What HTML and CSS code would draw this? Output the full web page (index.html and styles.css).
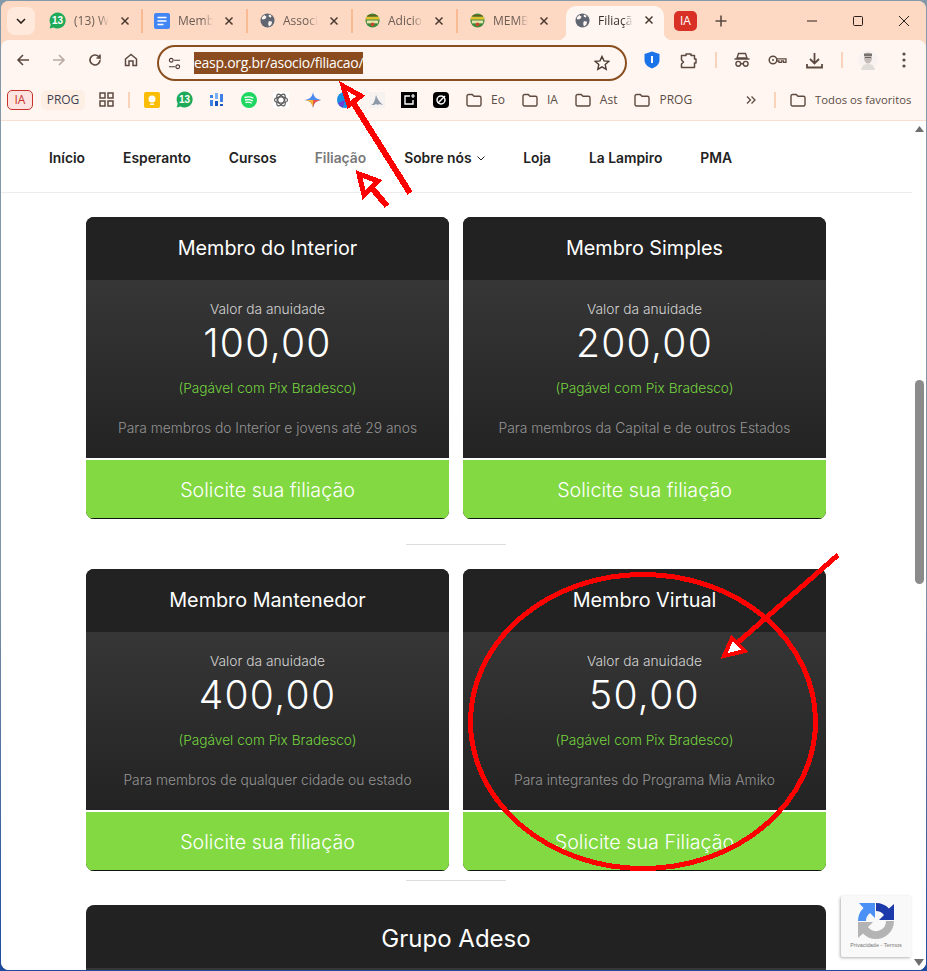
FILE: index.html
```html
<!DOCTYPE html>
<html lang="pt-BR">
<head>
<meta charset="utf-8">
<title>Filiação</title>
<link rel="stylesheet" href="styles.css">
</head>
<body>
<svg class="defs" width="0" height="0">
  <defs>
    <symbol id="globe" viewBox="0 0 16 16"><circle cx="8" cy="8" r="7.5" fill="#5f6672"/><path d="M4.500 2 7 4 5.500 6.500 2.500 7 1.800 5zM9.500 8.500l3.500.8-1 3.200-2.500 2-.8-3zM10 1.500l2.500 1.800-1.500 1.700-2-1.800z" fill="#fff6f2"/></symbol>
    <symbol id="wa" viewBox="0 0 16 16"><path d="M8 .5a7.5 7.5 0 1 1-3.600 14L.6 15.500l1-3.700A7.500 7.500 0 0 1 8 .5z" fill="#1faa59"/></symbol>
    <symbol id="coat" viewBox="0 0 16 16"><circle cx="8" cy="8" r="7.500" fill="#3d8a3a"/><rect x="1" y="4" width="14" height="3" fill="#e0c030"/><rect x="2" y="8" width="12" height="3" fill="#e8e4b0"/><circle cx="8" cy="12" r="2" fill="#c84a2a"/><path d="M3 2h10v1.500H3z" fill="#6b5a20"/></symbol>
    <symbol id="folder" viewBox="0 0 16 14"><path d="M1 3a1.500 1.500 0 0 1 1.500-1.500h3.700L8 3.300h5.500A1.500 1.500 0 0 1 15 4.800v6.700a1.500 1.500 0 0 1-1.500 1.500h-11A1.500 1.500 0 0 1 1 11.500z" fill="none" stroke="#5e4a3e" stroke-width="1.400"/></symbol>
    <symbol id="x" viewBox="0 0 10 10"><path d="M1.500 1.500l7 7M8.500 1.500l-7 7" stroke="#4a3a32" stroke-width="1.500" fill="none"/></symbol>
  </defs>
</svg>

<div class="browser">
  <header class="tabstrip">
    <div class="tabsearch"><svg width="10" height="6" viewBox="0 0 10 6"><path d="M1 1l4 4 4-4" fill="none" stroke="#2a201b" stroke-width="1.600"/></svg></div>
    <div class="tab tab-first"><span class="fav-wa"><svg width="17" height="17"><use href="#wa"/></svg><b>13</b></span><span class="tab-title">(13) W</span><svg class="tab-x" width="10" height="10"><use href="#x"/></svg></div>
    <div class="tab tab-doc"><svg width="16" height="16" viewBox="0 0 16 16"><rect width="16" height="16" rx="2" fill="#4285f4"/><path d="M3.500 4.500h9M3.500 8h9M3.500 11.500h6" stroke="#fff" stroke-width="1.500"/></svg><span class="tab-title">Memb</span><svg class="tab-x" width="10" height="10"><use href="#x"/></svg></div>
    <div class="tab"><svg width="15" height="15"><use href="#globe"/></svg><span class="tab-title">Associ</span><svg class="tab-x" width="10" height="10"><use href="#x"/></svg></div>
    <div class="tab"><svg width="15" height="15"><use href="#coat"/></svg><span class="tab-title">Adicio</span><svg class="tab-x" width="10" height="10"><use href="#x"/></svg></div>
    <div class="tab tab-last"><svg width="15" height="15"><use href="#coat"/></svg><span class="tab-title">MEMB</span><svg class="tab-x" width="10" height="10"><use href="#x"/></svg></div>
    <div class="tab-active"><svg width="15" height="15"><use href="#globe"/></svg><span class="tab-title active-title">Filiaçã</span><svg class="tab-x" width="10" height="10"><use href="#x"/></svg></div>
    <div class="ia-tab">IA</div>
    <svg class="newtab" width="12" height="12" viewBox="0 0 12 12"><path d="M6 .5v11M.5 6h11" stroke="#5a4a40" stroke-width="1.600"/></svg>
    <div class="winctl">
      <svg width="12" height="12" viewBox="0 0 12 12"><path d="M1 6h10" stroke="#2a201b" stroke-width="1"/></svg>
      <svg width="12" height="12" viewBox="0 0 12 12"><rect x="1.500" y="1.500" width="9" height="9" rx="1" fill="none" stroke="#2a201b" stroke-width="1"/></svg>
      <svg width="12" height="12" viewBox="0 0 12 12"><path d="M1 1l10 10M11 1L1 11" stroke="#2a201b" stroke-width="1"/></svg>
    </div>
  </header>

  <div class="toolbar">
    <div class="navbtns">
      <svg width="16" height="16" viewBox="0 0 16 16"><path d="M14 8H3M8 3 3 8l5 5" fill="none" stroke="#5c4a40" stroke-width="1.600"/></svg>
      <svg width="16" height="16" viewBox="0 0 16 16"><path d="M2 8h11M8 3l5 5-5 5" fill="none" stroke="#b8aaa2" stroke-width="1.600"/></svg>
      <svg width="16" height="16" viewBox="0 0 16 16"><path d="M13 8a5 5 0 1 1-1.500-3.600L13 6V2.500M13 6H9.500" fill="none" stroke="#5c4a40" stroke-width="1.600"/></svg>
      <svg width="16" height="16" viewBox="0 0 16 16"><path d="M2.500 7 8 2.500 13.500 7v6.500h-3.500V9H6v4.500H2.500z" fill="none" stroke="#5c4a40" stroke-width="1.500"/></svg>
    </div>
    <div class="omnibox">
      <svg class="tune" width="13" height="13" viewBox="0 0 14 14"><circle cx="3.500" cy="3.500" r="2" fill="none" stroke="#4a3a32" stroke-width="1.200"/><path d="M6.500 3.500H13M1 10.500h6.500" stroke="#4a3a32" stroke-width="1.200"/><circle cx="10.500" cy="10.500" r="2" fill="none" stroke="#4a3a32" stroke-width="1.200"/></svg>
      <span class="url">easp.org.br/asocio/filiacao/</span>
      <svg class="star" width="16" height="16" viewBox="0 0 16 16"><path d="M8 1.500l2 4.400 4.700.5-3.500 3.200 1 4.700L8 11.900l-4.200 2.400 1-4.700L1.300 6.400 6 5.900z" fill="none" stroke="#4a3a32" stroke-width="1.400"/></svg>
    </div>
    <div class="actions">
      <svg class="a-shield" width="16" height="18" viewBox="0 0 16 18"><path d="M8 .5l7.500 2.500v6c0 4-3.200 7-7.500 8.500C3.700 16 .5 13 .5 9V3z" fill="#1a73e8"/><rect x="7" y="5" width="2" height="7" fill="#fff"/></svg>
      <svg class="a-puzzle" width="17" height="17" viewBox="0 0 17 17"><path d="M1.500 3.500H6V2h5v1.500h3.500V7H16v4h-1.500v4.500h-13V12L3.500 10 1.500 8z" fill="none" stroke="#5c4a40" stroke-width="1.500" stroke-linejoin="round"/></svg>
      <i class="sep a-sep1"></i>
      <svg class="a-spy" width="16" height="16" viewBox="0 0 16 16"><path d="M4.500 1.500h7L13 6H3zM.5 7h15" fill="none" stroke="#5c4a40" stroke-width="1.400"/><circle cx="4.300" cy="11.800" r="2.400" fill="none" stroke="#5c4a40" stroke-width="1.400"/><circle cx="11.700" cy="11.800" r="2.400" fill="none" stroke="#5c4a40" stroke-width="1.400"/><path d="M6.700 11.800h2.600" stroke="#5c4a40" stroke-width="1.400"/></svg>
      <svg class="a-key" width="19" height="12" viewBox="0 0 19 12"><circle cx="5" cy="6" r="3.800" fill="none" stroke="#5c4a40" stroke-width="1.500"/><circle cx="5" cy="6" r="1" fill="#5c4a40"/><path d="M9 4.800h9v3.600h-2.500V6.800h-2v1.600H11V7H9" fill="none" stroke="#5c4a40" stroke-width="1.300"/></svg>
      <svg class="a-dl" width="17" height="17" viewBox="0 0 17 17"><path d="M8.500 1v10M4 7l4.500 4.500L13 7M1 12v3.500h15V12" fill="none" stroke="#5c4a40" stroke-width="1.800"/></svg>
      <i class="sep a-sep2"></i>
      <svg class="a-avatar" width="20" height="22" viewBox="0 0 20 22"><circle cx="10" cy="11" r="10" fill="#f8f3f0"/><ellipse cx="10" cy="9" rx="4" ry="5.500" fill="#c4bcb6"/><path d="M6 4.500h8v2.500H6z" fill="#77726e"/><path d="M7 8.500h6" stroke="#666" stroke-width="1"/><path d="M3 21c1-5 4-6 7-6s6 1 7 6z" fill="#e0dcd8"/></svg>
      <svg class="a-dots" width="4" height="16" viewBox="0 0 4 16"><circle cx="2" cy="2" r="1.600" fill="#5c4a40"/><circle cx="2" cy="8" r="1.600" fill="#5c4a40"/><circle cx="2" cy="14" r="1.600" fill="#5c4a40"/></svg>
    </div>
  </div>

  <div class="bookmarks">
    <span class="chip-ia">IA</span>
    <span class="chip-prog">PROG</span>
    <svg class="b-grid" width="15" height="15" viewBox="0 0 15 15"><path d="M1 1h5v5H1zM9 1h5v5H9zM1 9h5v5H1zM9 9h5v5H9z" fill="none" stroke="#5c4a40" stroke-width="1.500"/></svg>
    <i class="sep b-sep"></i>
    <div class="b-icons">
      <svg width="16" height="16" viewBox="0 0 16 16"><rect width="16" height="16" rx="2" fill="#fbbc04"/><circle cx="8" cy="7" r="3.500" fill="#fff"/><rect x="6" y="11.500" width="4" height="1.500" fill="#fff"/></svg>
      <span class="fav-wa"><svg width="17" height="17"><use href="#wa"/></svg><b>13</b></span>
      <svg width="16" height="16" viewBox="0 0 16 16"><g fill="#3f7fe8"><rect x="1" y="3" width="3" height="3"/><rect x="1" y="8" width="3" height="6"/><rect x="6" y="1" width="3" height="6" fill="#7ab0f5"/><rect x="6" y="9" width="3" height="5" fill="#1b55c0"/><rect x="11" y="2" width="3" height="8"/><rect x="11" y="12" width="3" height="2" fill="#1b55c0"/></g></svg>
      <svg width="16" height="16" viewBox="0 0 16 16"><circle cx="8" cy="8" r="8" fill="#1ed760"/><path d="M3.500 5.500c3-.8 6.500-.6 9 .8M4 8c2.500-.6 5.500-.4 7.800.8M4.500 10.500c2-.5 4.500-.3 6.300.7" fill="none" stroke="#fff" stroke-width="1.300"/></svg>
      <svg width="16" height="16" viewBox="0 0 16 16"><rect width="16" height="16" fill="#fff"/><g fill="none" stroke="#5a5a5a" stroke-width="1.200"><ellipse cx="8" cy="8" rx="6.500" ry="3.200"/><ellipse cx="8" cy="8" rx="6.500" ry="3.200" transform="rotate(60 8 8)"/><ellipse cx="8" cy="8" rx="6.500" ry="3.200" transform="rotate(120 8 8)"/></g></svg>
      <svg width="16" height="16" viewBox="0 0 16 16"><path d="M8 0c.6 4.500 3 7.200 8 8-5 .8-7.400 3.500-8 8-.6-4.500-3-7.200-8-8 5-.8 7.400-3.500 8-8z" fill="#4a8af0"/><path d="M8 8h8c-5 .8-7.400 3.500-8 8z" fill="#e8554a"/><path d="M8 8v8c-.6-4.500-3-7.200-8-8z" fill="#f5b82e"/></svg>
      <svg width="16" height="16" viewBox="0 0 16 16"><circle cx="8" cy="8" r="8" fill="#1a8fe0"/><path d="M1 11a8 8 0 0 0 5 4.800L8 8z" fill="#6b3fd6"/><path d="M8 3a5 5 0 0 1 5 5H8z" fill="#fff6f2"/></svg>
      <svg width="16" height="16" viewBox="0 0 16 16"><rect width="16" height="16" fill="#f6f2f0"/><path d="M2 13c3-1 4-5 5-10 1 3 3 7 7 10l-4-1-1 1-2-1-2 1z" fill="#8d99a8"/></svg>
      <svg width="16" height="16" viewBox="0 0 16 16"><rect width="16" height="16" fill="#000"/><path d="M9 4H4v8h8V8" fill="none" stroke="#fff" stroke-width="1.400"/><path d="M12 2v4M10 4h4" stroke="#fff" stroke-width="1.200"/></svg>
      <svg width="16" height="16" viewBox="0 0 16 16"><rect width="16" height="16" rx="4" fill="#000"/><circle cx="8" cy="8" r="4" fill="none" stroke="#fff" stroke-width="1.500"/><path d="M5 11 12 4" stroke="#fff" stroke-width="1.500"/></svg>
    </div>
    <div class="b-folders">
      <span class="folder"><svg width="16" height="14"><use href="#folder"/></svg>Eo</span>
      <span class="folder"><svg width="16" height="14"><use href="#folder"/></svg>IA</span>
      <span class="folder"><svg width="16" height="14"><use href="#folder"/></svg>Ast</span>
      <span class="folder"><svg width="16" height="14"><use href="#folder"/></svg>PROG</span>
    </div>
    <svg class="b-more" width="10" height="8" viewBox="0 0 10 8"><path d="M1 .5 4.500 4 1 7.500M5.500.5 9 4 5.500 7.500" fill="none" stroke="#5c4a40" stroke-width="1.300"/></svg>
    <i class="sep b-sep2"></i>
    <span class="folder folder-all"><svg width="16" height="14"><use href="#folder"/></svg>Todos os favoritos</span>
  </div>

  <div class="viewport">
    <main class="page">
      <nav class="sitenav">
        <a>Início</a><a>Esperanto</a><a>Cursos</a><a class="current">Filiação</a>
        <a class="has-sub">Sobre nós <svg width="8" height="5" viewBox="0 0 8 5"><path d="M.5.5 4 4 7.500.5" fill="none" stroke="#222" stroke-width="1"/></svg></a>
        <a>Loja</a><a>La Lampiro</a><a>PMA</a>
      </nav>

      <section class="cards first">
        <article class="card">
          <h2 class="card-head">Membro do Interior</h2>
          <div class="card-body"><p class="lbl">Valor da anuidade</p><p class="price">100,00</p><p class="pix">(Pagável com Pix Bradesco)</p><p class="desc">Para membros do Interior e jovens até 29 anos</p></div>
          <a class="card-btn">Solicite sua filiação</a>
        </article>
        <article class="card">
          <h2 class="card-head">Membro Simples</h2>
          <div class="card-body"><p class="lbl">Valor da anuidade</p><p class="price">200,00</p><p class="pix">(Pagável com Pix Bradesco)</p><p class="desc">Para membros da Capital e de outros Estados</p></div>
          <a class="card-btn">Solicite sua filiação</a>
        </article>
      </section>
      <hr class="rule rule-a">
      <section class="cards">
        <article class="card">
          <h2 class="card-head">Membro Mantenedor</h2>
          <div class="card-body"><p class="lbl">Valor da anuidade</p><p class="price">400,00</p><p class="pix">(Pagável com Pix Bradesco)</p><p class="desc">Para membros de qualquer cidade ou estado</p></div>
          <a class="card-btn">Solicite sua filiação</a>
        </article>
        <article class="card">
          <h2 class="card-head">Membro Virtual</h2>
          <div class="card-body"><p class="lbl">Valor da anuidade</p><p class="price">50,00</p><p class="pix">(Pagável com Pix Bradesco)</p><p class="desc">Para integrantes do Programa Mia Amiko</p></div>
          <a class="card-btn">Solicite sua Filiação</a>
        </article>
      </section>
      <hr class="rule rule-b">
      <section class="wide">
        <h2 class="wide-head">Grupo Adeso</h2>
        <div class="wide-body"></div>
      </section>
    </main>
    <aside class="scrollbar">
      <svg width="9" height="6" viewBox="0 0 9 6"><path d="M4.500 0 9 6H0z" fill="#6e6e6e"/></svg>
      <div class="thumb"></div>
      <svg width="10" height="7" viewBox="0 0 10 7"><path d="M5 7 0 0h10z" fill="#6e6e6e"/></svg>
    </aside>
  </div>
</div>

<div class="recaptcha">
  <svg width="38" height="38" viewBox="0 0 38 38">
    <path d="M37 19A18 18 0 0 1 19 37 18 18 0 0 1 6 31.500L1 36V20H16L11 25A10 10 0 0 0 29 19z" fill="#b4b4b4"/>
    <path d="M1 19A18 18 0 0 1 6.500 6L2 1H18V16L13 11A10 10 0 0 0 9 19z" fill="#4a90f5"/>
    <path d="M19 1A18 18 0 0 1 32 6.500L37 2V18H22L27 13A10 10 0 0 0 19 9z" fill="#1c3aa9"/>
  </svg>
  <span class="rc-text">Privacidade - Termos</span>
</div>

<svg class="marks" width="927" height="971" viewBox="0 0 927 971" shape-rendering="crispEdges">
  <g fill="none" stroke="#f00" stroke-width="5">
    <path d="M410 193 354 104" stroke-width="6"/>
    <path d="M343 86 361 96 349 105z" fill="#fff"/>
    <path d="M387 206 371 187" stroke-width="6"/>
    <path d="M359 174 378 181 364 195z" fill="#fff"/>
    <path d="M838 555 736 644" stroke-width="5"/>
    <path d="M724 656 732 638 745 651z" fill="#fff" stroke-width="4"/>
    <ellipse cx="643" cy="721.500" rx="172.500" ry="147"/>
  </g>
</svg>
</body>
</html>
```

FILE: styles.css
```css
* { box-sizing: border-box; }
html, body { margin: 0; padding: 0; height: 971px; overflow: hidden; }
body { position: relative; background: linear-gradient(#8499a9, #7f93a3 60%, #1c4a9e); font-family: "Open Sans", "Noto Sans", sans-serif; color: #222; }
p, h2 { margin: 0; font-weight: normal; }
.defs { position: absolute; }
.marks { position: absolute; left: 0; top: 0; pointer-events: none; }

.browser { width: 925px; height: 969px; margin: 1px; display: flex; flex-direction: column; border-radius: 8px; overflow: hidden; background: #fdd9c4; }

.tabstrip { height: 39px; background: #fdd9c4; display: flex; align-items: center; position: relative; flex: none; }
.tabsearch { width: 28px; height: 28px; margin-left: 6px; border-radius: 8px; background: #ffe9dc; display: flex; align-items: center; justify-content: center; }
.tab { width: 105px; height: 24px; display: flex; align-items: center; padding-left: 12px; border-right: 2px solid #f9bb94; font-size: 12px; color: #6b5c54; }
.tab-first { width: 108px; padding-left: 14px; }
.tab-doc { padding-left: 11px; }
.tab svg:first-child, .tab .fav-wa { flex: none; }
.tab-title { width: 35px; margin-left: 8px; overflow: hidden; white-space: nowrap; -webkit-mask-image: linear-gradient(90deg, #000 70%, transparent); mask-image: linear-gradient(90deg, #000 70%, transparent); }
.tab-x { margin-left: 11px; flex: none; }
.tab-last { border-right: 0; width: 108px; }
.tab-active { position: relative; width: 98px; height: 34px; align-self: flex-end; background: #fff6f2; border-radius: 10px 10px 0 0; display: flex; align-items: center; padding: 0 0 6px 9px; font-size: 12px; }
.tab-active::before, .tab-active::after { content: ""; position: absolute; bottom: 0; width: 8px; height: 8px; }
.tab-active::before { left: -8px; background: radial-gradient(circle at 0 0, transparent 8px, #fff6f2 8.500px); }
.tab-active::after { right: -8px; background: radial-gradient(circle at 100% 0, transparent 8px, #fff6f2 8.500px); }
.active-title { color: #3d2f28; }
.ia-tab { width: 23px; height: 20px; margin-left: 10px; background: #d93025; border-radius: 5px; color: #fff; font-size: 12px; text-align: center; line-height: 20px; }
.newtab { margin-left: 18px; }
.winctl { position: absolute; right: 16px; top: 14px; display: flex; gap: 34px; }

.toolbar { height: 40px; background: #fff6f2; border-radius: 8px 8px 0 0; display: flex; align-items: center; flex: none; }
.navbtns { display: flex; gap: 20px; margin-left: 14px; width: 142px; }
.omnibox { position: relative; z-index: 1; width: 470px; height: 36px; margin-top: 6px; border: 2px solid #8a4f1e; border-radius: 18px; display: flex; align-items: center; padding-left: 9px; }
.tune { flex: none; }
.url { margin-left: 13px; background: #8a4c1e; color: #fff; font-size: 14px; line-height: 22px; height: 22px; letter-spacing: -.28px; white-space: nowrap; }
.star { position: absolute; right: 15px; top: 8px; }
.actions { display: flex; align-items: center; margin-left: 17px; }
.sep { display: block; width: 2px; height: 16px; background: #fbd2ba; flex: none; }
.a-puzzle { margin-left: 20px; }
.a-sep1 { margin-left: 18px; }
.a-spy { margin-left: 17px; }
.a-key { margin-left: 18px; }
.a-dl { margin-left: 19px; }
.a-sep2 { margin-left: 18px; }
.a-avatar { margin-left: 15px; }
.a-dots { margin-left: 24px; }

.bookmarks { height: 41px; background: #fff6f2; border-bottom: 1px solid #f8dfd2; display: flex; align-items: center; font-size: 12px; color: #5b4c44; flex: none; padding-bottom: 1px; }
.chip-ia { width: 26px; height: 20px; margin-left: 6px; border: 1px solid #c5332c; border-radius: 5px; background: #fde4e0; color: #c5332c; text-align: center; line-height: 18px; }
.chip-prog { width: 44px; height: 20px; margin-left: 8px; border-radius: 5px; background: #fdefe4; text-align: center; line-height: 20px; color: #3f3f52; }
.b-grid { margin-left: 14px; }
.b-sep { margin-left: 14px; height: 16px; }
.b-icons { display: flex; align-items: center; gap: 16px; margin-left: 14px; width: 312px; }
.fav-wa { position: relative; width: 17px; height: 17px; display: block; }
.fav-wa svg { display: block; }
.fav-wa b { position: absolute; left: 0; right: 0; top: 0; text-align: center; color: #fff; font-family: "Liberation Sans", sans-serif; font-size: 10px; line-height: 17px; font-weight: 700; }
.b-folders { display: flex; gap: 17px; margin-left: 10px; width: 280px; }
.folder { display: inline-flex; align-items: center; gap: 9px; }
.b-more { flex: none; }
.b-sep2 { margin-left: 18px; height: 16px; }
.folder-all { margin-left: 14px; font-size: 11.300px; white-space: nowrap; }

.viewport { flex: 1; min-height: 0; display: flex; background: #fff; }
.page { flex: 1; min-width: 0; overflow: hidden; font-family: Inter, "Liberation Sans", sans-serif; }
.sitenav { height: 72px; border-bottom: 1px solid #ececec; display: flex; align-items: center; padding-left: 48px; gap: 38px; font-size: 13.850px; font-weight: 600; color: #222; padding-top: 2px; }
.sitenav a { white-space: nowrap; }
.sitenav .current { color: #787878; }
.has-sub svg { margin-left: 2px; vertical-align: middle; }

.cards { display: flex; gap: 14px; margin-left: 85px; }
.cards.first { margin-top: 24px; }
.card { width: 363px; height: 302px; border-radius: 8px; overflow: hidden; display: flex; flex-direction: column; text-align: center; background: #111; }
.card-head { height: 63px; background: #222; color: #fff; font-size: 19.800px; line-height: 63px; font-weight: 400; flex: none; }
.card-body { height: 178px; background: linear-gradient(#363636, #232323); padding-top: 21px; flex: none; }
.lbl { font-size: 13.750px; line-height: 16px; color: #d3d3d3; font-weight: 300; }
.price { font-size: 39px; line-height: 48px; letter-spacing: 1.300px; color: #fff; font-weight: 300; margin-top: 2px; }
.pix { font-size: 13.700px; line-height: 18px; color: #74d43e; font-weight: 300; margin-top: 12px; }
.desc { font-size: 13.800px; line-height: 18px; color: #949494; font-weight: 300; margin-top: 22px; }
.card-btn { display: block; height: 61px; border-top: 2px solid #fff; border-bottom: 1px solid #111; background: #82d942; color: #fff; font-size: 19.700px; line-height: 60px; font-weight: 300; flex: none; }

.rule { border: 0; height: 1px; background: #dcdcdc; width: 100px; margin: 0 0 0 405px; }
.rule-a { margin-top: 25px; margin-bottom: 24px; }
.rule-b { margin-top: 9px; margin-bottom: 24px; }

.wide { margin-left: 85px; width: 740px; border-radius: 8px 8px 0 0; overflow: hidden; text-align: center; }
.wide-head { height: 63px; background: #222; color: #fff; font-size: 24px; line-height: 67px; font-weight: 400; }
.wide-body { height: 20px; background: #363636; }

.scrollbar { width: 14px; flex: none; background: #fff; display: flex; flex-direction: column; align-items: center; padding-top: 5px; }
.thumb { width: 9px; height: 204px; background: #8b8b8b; border-radius: 5px; margin-top: 248px; margin-bottom: auto; }
.scrollbar svg:last-child { margin-bottom: 4px; }

.recaptcha { position: absolute; left: 841px; top: 896px; width: 70px; height: 61px; background: #f9f9f9; border-radius: 2px 0 0 2px; box-shadow: -1px 1px 3px rgba(0,0,0,.3); display: flex; flex-direction: column; align-items: center; padding-top: 6px; }
.rc-text { font-family: "Liberation Sans", sans-serif; font-size: 5.500px; color: #777; margin-top: 2px; white-space: nowrap; }
```
